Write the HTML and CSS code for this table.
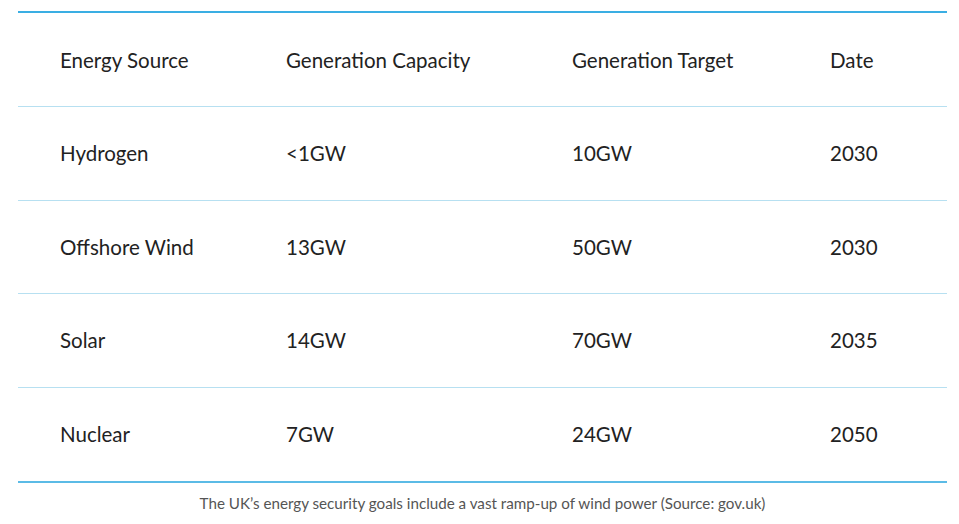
FILE: index.html
```html
<!DOCTYPE html>
<html>
<head>
<meta charset="utf-8">
<link rel="stylesheet" href="styles.css">
</head>
<body>
<figure class="fig">
  <div class="table">
    <div class="row head">
      <div class="c c1">Energy Source</div>
      <div class="c c2">Generation Capacity</div>
      <div class="c c3">Generation Target</div>
      <div class="c c4">Date</div>
    </div>
    <div class="row">
      <div class="c c1">Hydrogen</div>
      <div class="c c2">&lt;1GW</div>
      <div class="c c3">10GW</div>
      <div class="c c4">2030</div>
    </div>
    <div class="row">
      <div class="c c1">Offshore Wind</div>
      <div class="c c2">13GW</div>
      <div class="c c3">50GW</div>
      <div class="c c4">2030</div>
    </div>
    <div class="row">
      <div class="c c1">Solar</div>
      <div class="c c2">14GW</div>
      <div class="c c3">70GW</div>
      <div class="c c4">2035</div>
    </div>
    <div class="row last">
      <div class="c c1">Nuclear</div>
      <div class="c c2">7GW</div>
      <div class="c c3">24GW</div>
      <div class="c c4">2050</div>
    </div>
  </div>
  <figcaption class="cap">The UK’s energy security goals include a vast ramp-up of wind power (Source: gov.uk)</figcaption>
</figure>
</body>
</html>
```
FILE: styles.css
```css
html, body {
  margin: 0;
  padding: 0;
  background: #fff;
}
.fig {
  margin: 0;
  padding: 11px 12px 0 18px;
  width: 929px;
  font-family: Lato, "Open Sans", sans-serif;
}
.table {
  border-top: 2px solid #3aaee3;
  border-bottom: 2px solid #5bbbe6;
}
.row {
  box-sizing: border-box;
  display: grid;
  grid-template-columns: 268px 286px 258px 1fr;
  height: 93.6px;
  align-items: center;
  border-bottom: 1px solid #b7e0f1;
  color: #222;
  font-size: 20.5px;
}
.row.head {
  height: 94px;
}
.row.last {
  border-bottom: none;
  height: 92.8px;
}
.c1 {
  padding-left: 42px;
}
.cap {
  text-align: center;
  color: #555;
  font-size: 15.2px;
  margin-top: 11px;
}
```
